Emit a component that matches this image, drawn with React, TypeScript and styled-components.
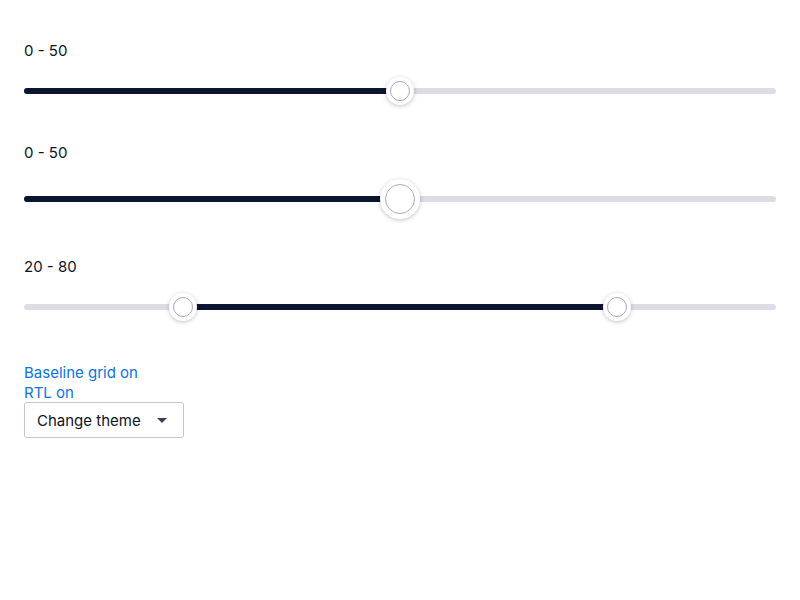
import React from "react";
import styled, { createGlobalStyle } from "styled-components";

const Global = createGlobalStyle`
  html, body { margin: 0; padding: 0; background: #ffffff; }
  body { font-family: Inter, "Open Sans", "Liberation Sans", sans-serif; color: #0c1426; }
`;

const Page = styled.div`
  display: flex;
  flex-direction: column;
  padding: 40px 24px 0 24px;
`;

const SliderGroup = styled.div`
  display: flex;
  flex-direction: column;
  gap: 17px;
  margin-bottom: 37px;
`;

const Label = styled.div`
  box-sizing: border-box;
  font-size: 15px;
  line-height: 18px;
  height: 20px;
  padding-top: 2px;
  color: #0c1426;
`;

const Rail = styled.div<{ $size: number }>`
  position: relative;
  height: ${(p) => p.$size}px;
  display: flex;
  align-items: center;
`;

const Track = styled.div`
  position: relative;
  width: 100%;
  height: 6px;
  border-radius: 3px;
  background: #dcdce4;
`;

const Fill = styled.div`
  position: absolute;
  top: 0;
  bottom: 0;
  border-radius: 3px;
  background: #0b1530;
`;

const Thumb = styled.div<{ $size: number }>`
  position: absolute;
  top: 50%;
  width: ${(p) => p.$size}px;
  height: ${(p) => p.$size}px;
  border-radius: 50%;
  background: #ffffff;
  box-shadow: 0 1px 4px rgba(20, 20, 40, 0.25);
  transform: translate(-50%, -50%);
  display: flex;
  align-items: center;
  justify-content: center;
`;

const Ring = styled.div<{ $size: number }>`
  width: ${(p) => p.$size}px;
  height: ${(p) => p.$size}px;
  box-sizing: border-box;
  border-radius: 50%;
  border: 1px solid #a9a8bb;
`;

const pos = (p: number) => `calc(14px + (100% - 28px) * ${p})`;

type SliderProps = { label: string; values: number[]; large?: boolean };

const Slider = ({ label, values, large }: SliderProps) => {
  const size = large ? 40 : 28;
  const ring = large ? 30 : 20;
  const range = values.length > 1;
  const start = range ? pos(values[0] / 100) : "0px";
  const end = pos(values[values.length - 1] / 100);
  return (
    <SliderGroup>
      <Label>{label}</Label>
      <Rail $size={size}>
        <Track>
          <Fill style={{ left: start, width: `calc(${end} - ${start})` }} />
          {values.map((v, i) => (
            <Thumb key={i} $size={size} style={{ left: pos(v / 100) }}>
              <Ring $size={ring} />
            </Thumb>
          ))}
        </Track>
      </Rail>
    </SliderGroup>
  );
};

const Controls = styled.div`
  display: flex;
  flex-direction: column;
  align-items: flex-start;
  margin-top: 4px;
`;

const LinkText = styled.a`
  box-sizing: border-box;
  display: block;
  height: 20px;
  padding-top: 2px;
  font-size: 15px;
  line-height: 18px;
  color: #0a74e4;
  text-decoration: none;
  cursor: pointer;
`;

const SelectButton = styled.button`
  display: flex;
  align-items: center;
  justify-content: space-between;
  box-sizing: border-box;
  width: 160px;
  height: 36px;
  padding: 0 16px 0 12px;
  border: 1px solid #c6c6d0;
  border-radius: 3px;
  background: #ffffff;
  font-family: inherit;
  font-size: 15px;
  color: #0c1426;
`;

const Caret = styled.span`
  width: 0;
  height: 0;
  border-left: 5px solid transparent;
  border-right: 5px solid transparent;
  border-top: 5px solid #3a3f55;
`;

export default function App() {
  return (
    <>
      <Global />
      <Page>
        <Slider label="0 - 50" values={[50]} />
        <Slider label="0 - 50" values={[50]} large />
        <Slider label="20 - 80" values={[20, 80]} />
        <Controls>
          <LinkText>Baseline grid on</LinkText>
          <LinkText>RTL on</LinkText>
          <SelectButton>
            Change theme
            <Caret />
          </SelectButton>
        </Controls>
      </Page>
    </>
  );
}
